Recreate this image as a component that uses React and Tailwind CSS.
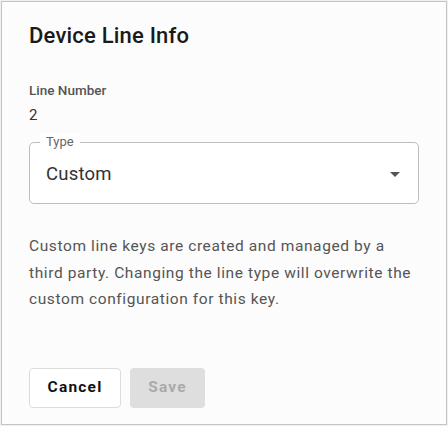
export default function App() {
  return (
    <div className="h-[426px] w-[448px] bg-[#f0f0f0] p-px font-['Roboto',sans-serif]">
      <div className="flex h-full flex-col border border-[#c4c4c4] bg-[#fcfcfc] px-[27px]">
        <h1 className="mt-[20px] text-[22px] font-medium leading-[28px] tracking-[0.2px] text-[#1a1a1a]">
          Device Line Info
        </h1>

        <div className="mt-[32px] text-[13.5px] font-medium leading-[16px] text-[#555]">Line Number</div>
        <div className="mt-[8px] text-[15px] leading-[18px] text-[#333]">2</div>

        <div className="relative mt-[18px] flex h-[62px] items-center justify-between rounded-[5px] border border-[#bdbdbd] bg-white pl-[16px] pr-[18px] pt-[3px]">
          <span className="absolute left-[10px] top-[-10px] bg-white px-[6px] text-[13px] leading-[18px] text-[#666]">
            Type
          </span>
          <span className="text-[18.5px] tracking-[0.2px] text-[#333]">Custom</span>
          <svg width="10" height="5" viewBox="0 0 10 5">
            <path d="M0 0L5 5L10 0Z" fill="#555" />
          </svg>
        </div>

        <p className="mt-[29px] text-[15.5px] leading-[26.5px] tracking-[0.6px] text-[#555]">
          Custom line keys are created and managed by a third party. Changing the line type will overwrite the
          custom configuration for this key.
        </p>

        <div className="mt-auto mb-[16px] flex gap-[9px]">
          <button className="h-[40px] w-[92px] rounded-[4px] border border-[#dcdcdc] bg-white text-[15.5px] font-bold tracking-[1.2px] text-[#111]">
            Cancel
          </button>
          <button className="h-[40px] w-[75px] rounded-[4px] bg-[#dedede] text-[15.5px] font-bold tracking-[1.2px] text-[#aaa]">
            Save
          </button>
        </div>
      </div>
    </div>
  );
}
